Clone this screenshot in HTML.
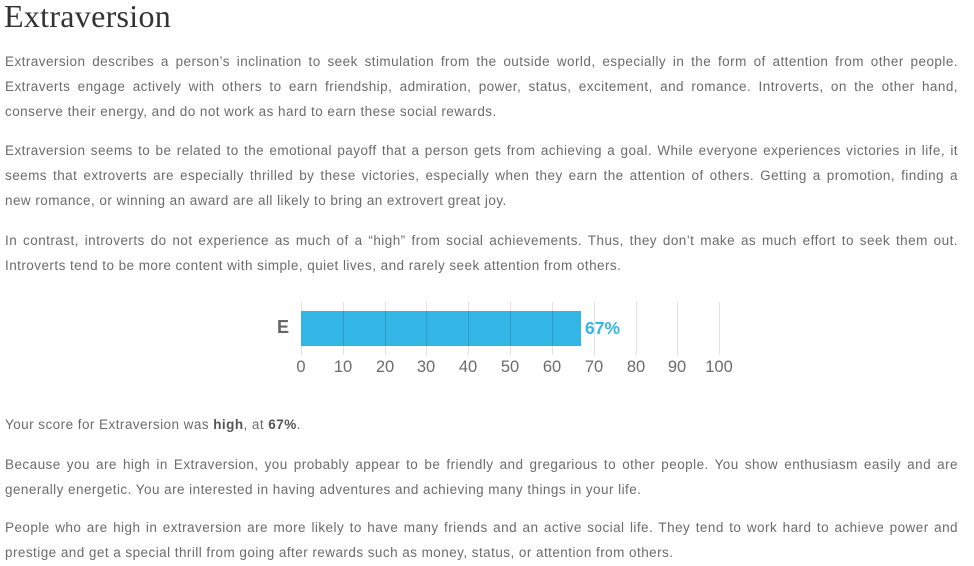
<!DOCTYPE html>
<html><head><meta charset="utf-8"><style>
body{margin:0;width:974px;height:566px;background:#fff;position:relative;overflow:hidden;font-family:"Liberation Sans",sans-serif;color:#6b6b6b}
h1{position:absolute;left:4px;top:-2px;margin:0;font-family:"Liberation Serif",serif;font-weight:normal;font-size:32px;color:#333;letter-spacing:0.3px}
.l{position:absolute;left:5px;width:953px;font-size:13.5px;letter-spacing:0.45px;line-height:20px;white-space:nowrap}
.j{text-align:justify;text-align-last:justify;white-space:normal}
b{color:#555}
.g{position:absolute;top:302px;height:53px;width:1px;background:#e2e2e2}
.t{position:absolute;top:358px;font-size:16.5px;color:#6b6b6b;transform:translateX(-50%)}
</style></head><body>
<h1>Extraversion</h1>
<div class="l j" style="top:52px">Extraversion describes a person’s inclination to seek stimulation from the outside world, especially in the form of attention from other people.</div>
<div class="l j" style="top:77px">Extraverts engage actively with others to earn friendship, admiration, power, status, excitement, and romance. Introverts, on the other hand,</div>
<div class="l" style="top:102px">conserve their energy, and do not work as hard to earn these social rewards.</div>
<div class="l j" style="top:141px">Extraversion seems to be related to the emotional payoff that a person gets from achieving a goal. While everyone experiences victories in life, it</div>
<div class="l j" style="top:166px">seems that extroverts are especially thrilled by these victories, especially when they earn the attention of others. Getting a promotion, finding a</div>
<div class="l" style="top:191px">new romance, or winning an award are all likely to bring an extrovert great joy.</div>
<div class="l j" style="top:231px">In contrast, introverts do not experience as much of a “high” from social achievements. Thus, they don’t make as much effort to seek them out.</div>
<div class="l" style="top:256px">Introverts tend to be more content with simple, quiet lives, and rarely seek attention from others.</div>

<div class="g" style="left:301px"></div><div class="g" style="left:343px"></div><div class="g" style="left:385px"></div><div class="g" style="left:426px"></div><div class="g" style="left:468px"></div><div class="g" style="left:510px"></div><div class="g" style="left:552px"></div><div class="g" style="left:594px"></div><div class="g" style="left:636px"></div><div class="g" style="left:677px"></div><div class="g" style="left:719px"></div>
<div style="position:absolute;left:301px;top:311px;width:280px;height:35px;background:#33b5e5"></div>
<div style="position:absolute;left:343px;top:311px;width:1px;height:35px;background:rgba(0,0,0,.12)"></div>
<div style="position:absolute;left:385px;top:311px;width:1px;height:35px;background:rgba(0,0,0,.12)"></div>
<div style="position:absolute;left:426px;top:311px;width:1px;height:35px;background:rgba(0,0,0,.12)"></div>
<div style="position:absolute;left:468px;top:311px;width:1px;height:35px;background:rgba(0,0,0,.12)"></div>
<div style="position:absolute;left:510px;top:311px;width:1px;height:35px;background:rgba(0,0,0,.12)"></div>
<div style="position:absolute;left:552px;top:311px;width:1px;height:35px;background:rgba(0,0,0,.12)"></div>
<div style="position:absolute;left:277px;top:317px;font-size:18px;font-weight:bold;color:#666">E</div>
<div style="position:absolute;left:585px;top:318px;font-size:17.5px;font-weight:bold;color:#33b5e5">67%</div>
<div class="t" style="left:301px">0</div><div class="t" style="left:343px">10</div><div class="t" style="left:385px">20</div><div class="t" style="left:426px">30</div><div class="t" style="left:468px">40</div><div class="t" style="left:510px">50</div><div class="t" style="left:552px">60</div><div class="t" style="left:594px">70</div><div class="t" style="left:636px">80</div><div class="t" style="left:677px">90</div><div class="t" style="left:719px">100</div>

<div class="l" style="top:415px">Your score for Extraversion was <b>high</b>, at <b>67%</b>.</div>
<div class="l j" style="top:455px">Because you are high in Extraversion, you probably appear to be friendly and gregarious to other people. You show enthusiasm easily and are</div>
<div class="l" style="top:480px">generally energetic. You are interested in having adventures and achieving many things in your life.</div>
<div class="l j" style="top:518px">People who are high in extraversion are more likely to have many friends and an active social life. They tend to work hard to achieve power and</div>
<div class="l" style="top:543px">prestige and get a special thrill from going after rewards such as money, status, or attention from others.</div>
</body></html>
